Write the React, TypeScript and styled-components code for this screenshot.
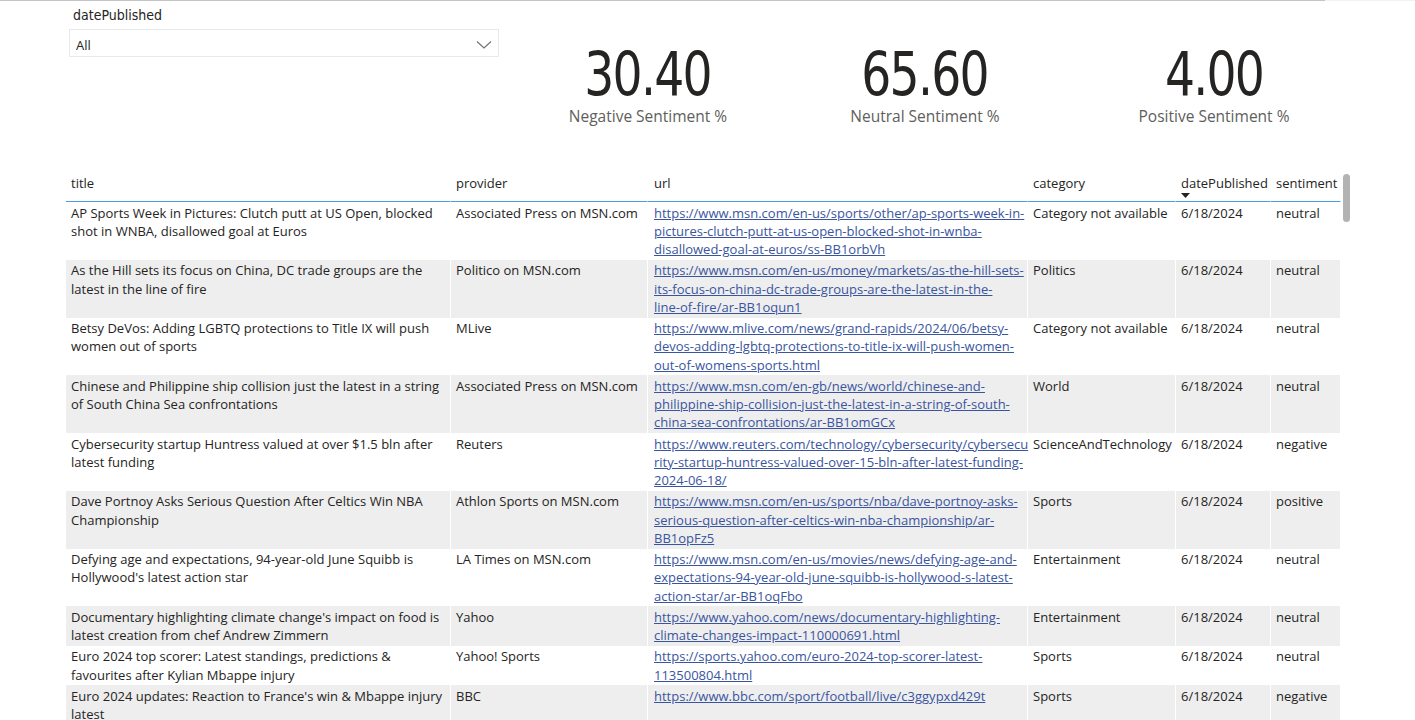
import React from "react";
import styled, { createGlobalStyle } from "styled-components";

const GlobalStyle = createGlobalStyle`
  html, body {
    margin: 0;
    padding: 0;
    background: #ffffff;
    overflow: hidden;
  }
  body {
    font-family: "Open Sans", "Noto Sans", sans-serif;
    color: #252423;
  }
  * { box-sizing: border-box; }
`;

const Page = styled.div`
  width: 1415px;
  height: 720px;
  overflow: hidden;
  display: flex;
  flex-direction: column;
`;

const TopRule = styled.div`
  display: flex;
  height: 1px;
  flex: none;
`;

const RuleSegment = styled.div<{ $w: number; $c: string }>`
  width: ${(p) => p.$w}px;
  background: ${(p) => p.$c};
`;

const TopSection = styled.div`
  display: flex;
  height: 173px;
  padding-left: 69px;
  flex: none;
`;

const Slicer = styled.div`
  width: 430px;
  padding-top: 5px;
  display: flex;
  flex-direction: column;
`;

const SlicerLabel = styled.div`
  font-family: "DejaVu Sans Condensed", sans-serif;
  font-size: 14px;
  line-height: 18px;
  margin-left: 4px;
  color: #252423;
`;

const Dropdown = styled.div`
  margin-top: 5px;
  height: 28px;
  border: 1px solid #e8e8e8;
  display: flex;
  align-items: center;
  justify-content: space-between;
  padding: 3px 6px 0 6px;
  font-size: 13px;
  color: #252423;
`;

const KpiRow = styled.div`
  display: flex;
`;

const KpiCard = styled.div<{ $w: number }>`
  width: ${(p) => p.$w}px;
  padding-top: 41px;
  display: flex;
  flex-direction: column;
  align-items: center;
`;

const KpiValue = styled.div`
  font-family: "DejaVu Sans Condensed", sans-serif;
  font-size: 61px;
  line-height: 64px;
  letter-spacing: -2px;
  color: #252423;
  transform: scaleX(0.86);
`;

const KpiLabel = styled.div`
  margin-top: 0;
  font-size: 15.5px;
  line-height: 20px;
  color: #605e5c;
`;

const TableSection = styled.div`
  display: flex;
  padding-left: 66px;
  flex: 1;
  min-height: 0;
`;

const Table = styled.div`
  width: 1275px;
  display: flex;
  flex-direction: column;
`;

const cols = "385px 197px 380px 148px 95px 70px";

const HeaderRow = styled.div`
  display: grid;
  grid-template-columns: ${cols};
`;

const HeaderCell = styled.div<{ $pl: number; $sorted?: boolean }>`
  padding: 0 5px ${(p) => (p.$sorted ? 3 : 9)}px ${(p) => p.$pl}px;
  font-size: 13px;
  line-height: 18px;
  color: #252423;
  border-bottom: 1px solid #4f9be6;
  border-right: 1px solid #ffffff;
  white-space: nowrap;
`;

const SortArrow = styled.svg`
  display: block;
  margin-top: 1px;
`;

const Row = styled.div<{ $alt: boolean }>`
  display: grid;
  grid-template-columns: ${cols};
  background: ${(p) => (p.$alt ? "#eeeeee" : "#ffffff")};
`;

const Cell = styled.div<{ $pl: number }>`
  padding: 1.5px 4px 1.5px ${(p) => p.$pl}px;
  font-size: 13px;
  line-height: 18.25px;
  color: #252423;
  border-right: 1px solid #ffffff;
`;

const Line = styled.span`
  display: block;
  white-space: nowrap;
`;

const Link = styled.a`
  color: #3a55a0;
  text-decoration: underline;
`;

const ScrollTrack = styled.div`
  width: 7px;
  margin-left: 2px;
`;

const ScrollThumb = styled.div`
  height: 48px;
  border-radius: 4px;
  background: #b3b3b3;
`;

type Article = {
  title: string[];
  provider: string;
  url: string[];
  category: string;
  date: string;
  sentiment: string;
};

const rows: Article[] = [
  {
    title: ["AP Sports Week in Pictures: Clutch putt at US Open, blocked", "shot in WNBA, disallowed goal at Euros"],
    provider: "Associated Press on MSN.com",
    url: [
      "https://www.msn.com/en-us/sports/other/ap-sports-week-in-",
      "pictures-clutch-putt-at-us-open-blocked-shot-in-wnba-",
      "disallowed-goal-at-euros/ss-BB1orbVh",
    ],
    category: "Category not available",
    date: "6/18/2024",
    sentiment: "neutral",
  },
  {
    title: ["As the Hill sets its focus on China, DC trade groups are the", "latest in the line of fire"],
    provider: "Politico on MSN.com",
    url: [
      "https://www.msn.com/en-us/money/markets/as-the-hill-sets-",
      "its-focus-on-china-dc-trade-groups-are-the-latest-in-the-",
      "line-of-fire/ar-BB1oqun1",
    ],
    category: "Politics",
    date: "6/18/2024",
    sentiment: "neutral",
  },
  {
    title: ["Betsy DeVos: Adding LGBTQ protections to Title IX will push", "women out of sports"],
    provider: "MLive",
    url: [
      "https://www.mlive.com/news/grand-rapids/2024/06/betsy-",
      "devos-adding-lgbtq-protections-to-title-ix-will-push-women-",
      "out-of-womens-sports.html",
    ],
    category: "Category not available",
    date: "6/18/2024",
    sentiment: "neutral",
  },
  {
    title: ["Chinese and Philippine ship collision just the latest in a string", "of South China Sea confrontations"],
    provider: "Associated Press on MSN.com",
    url: [
      "https://www.msn.com/en-gb/news/world/chinese-and-",
      "philippine-ship-collision-just-the-latest-in-a-string-of-south-",
      "china-sea-confrontations/ar-BB1omGCx",
    ],
    category: "World",
    date: "6/18/2024",
    sentiment: "neutral",
  },
  {
    title: ["Cybersecurity startup Huntress valued at over $1.5 bln after", "latest funding"],
    provider: "Reuters",
    url: [
      "https://www.reuters.com/technology/cybersecurity/cybersecu",
      "rity-startup-huntress-valued-over-15-bln-after-latest-funding-",
      "2024-06-18/",
    ],
    category: "ScienceAndTechnology",
    date: "6/18/2024",
    sentiment: "negative",
  },
  {
    title: ["Dave Portnoy Asks Serious Question After Celtics Win NBA", "Championship"],
    provider: "Athlon Sports on MSN.com",
    url: [
      "https://www.msn.com/en-us/sports/nba/dave-portnoy-asks-",
      "serious-question-after-celtics-win-nba-championship/ar-",
      "BB1opFz5",
    ],
    category: "Sports",
    date: "6/18/2024",
    sentiment: "positive",
  },
  {
    title: ["Defying age and expectations, 94-year-old June Squibb is", "Hollywood's latest action star"],
    provider: "LA Times on MSN.com",
    url: [
      "https://www.msn.com/en-us/movies/news/defying-age-and-",
      "expectations-94-year-old-june-squibb-is-hollywood-s-latest-",
      "action-star/ar-BB1oqFbo",
    ],
    category: "Entertainment",
    date: "6/18/2024",
    sentiment: "neutral",
  },
  {
    title: ["Documentary highlighting climate change's impact on food is", "latest creation from chef Andrew Zimmern"],
    provider: "Yahoo",
    url: ["https://www.yahoo.com/news/documentary-highlighting-", "climate-changes-impact-110000691.html"],
    category: "Entertainment",
    date: "6/18/2024",
    sentiment: "neutral",
  },
  {
    title: ["Euro 2024 top scorer: Latest standings, predictions &", "favourites after Kylian Mbappe injury"],
    provider: "Yahoo! Sports",
    url: ["https://sports.yahoo.com/euro-2024-top-scorer-latest-", "113500804.html"],
    category: "Sports",
    date: "6/18/2024",
    sentiment: "neutral",
  },
  {
    title: ["Euro 2024 updates: Reaction to France's win & Mbappe injury", "latest"],
    provider: "BBC",
    url: ["https://www.bbc.com/sport/football/live/c3ggypxd429t"],
    category: "Sports",
    date: "6/18/2024",
    sentiment: "negative",
  },
];

const kpis = [
  { value: "30.40", label: "Negative Sentiment %", w: 298 },
  { value: "65.60", label: "Neutral Sentiment %", w: 256 },
  { value: "4.00", label: "Positive Sentiment %", w: 322 },
];

const headers = [
  { label: "title", pl: 5 },
  { label: "provider", pl: 5 },
  { label: "url", pl: 6 },
  { label: "category", pl: 5 },
  { label: "datePublished", pl: 5, sorted: true },
  { label: "sentiment", pl: 5 },
];

const Chevron = () => (
  <svg width="16" height="10" viewBox="0 0 16 10" aria-hidden>
    <polyline points="1,1.5 8,8 15,1.5" fill="none" stroke="#707070" strokeWidth="1.1" />
  </svg>
);

export default function App() {
  return (
    <Page>
      <GlobalStyle />
      <TopRule>
        <RuleSegment $w={1325} $c="#c4c4c4" />
        <RuleSegment $w={90} $c="#f2f2f2" />
      </TopRule>
      <TopSection>
        <Slicer>
          <SlicerLabel>datePublished</SlicerLabel>
          <Dropdown>
            <span>All</span>
            <Chevron />
          </Dropdown>
        </Slicer>
        <KpiRow>
          {kpis.map((k) => (
            <KpiCard key={k.label} $w={k.w}>
              <KpiValue>{k.value}</KpiValue>
              <KpiLabel>{k.label}</KpiLabel>
            </KpiCard>
          ))}
        </KpiRow>
      </TopSection>
      <TableSection>
        <Table>
          <HeaderRow>
            {headers.map((h) => (
              <HeaderCell key={h.label} $pl={h.pl} $sorted={h.sorted}>
                {h.label}
                {h.sorted && (
                  <SortArrow width="9" height="5" viewBox="0 0 9 5">
                    <polygon points="0,0 9,0 4.5,5" fill="#252423" />
                  </SortArrow>
                )}
              </HeaderCell>
            ))}
          </HeaderRow>
          {rows.map((r, i) => (
            <Row key={i} $alt={i % 2 === 1}>
              <Cell $pl={5}>
                {r.title.map((t) => (
                  <Line key={t}>{t}</Line>
                ))}
              </Cell>
              <Cell $pl={5}>{r.provider}</Cell>
              <Cell $pl={6}>
                <Link href={r.url.join("")}>
                  {r.url.map((u) => (
                    <Line key={u}>{u}</Line>
                  ))}
                </Link>
              </Cell>
              <Cell $pl={5}>{r.category}</Cell>
              <Cell $pl={5}>{r.date}</Cell>
              <Cell $pl={5}>{r.sentiment}</Cell>
            </Row>
          ))}
        </Table>
        <ScrollTrack>
          <ScrollThumb />
        </ScrollTrack>
      </TableSection>
    </Page>
  );
}
